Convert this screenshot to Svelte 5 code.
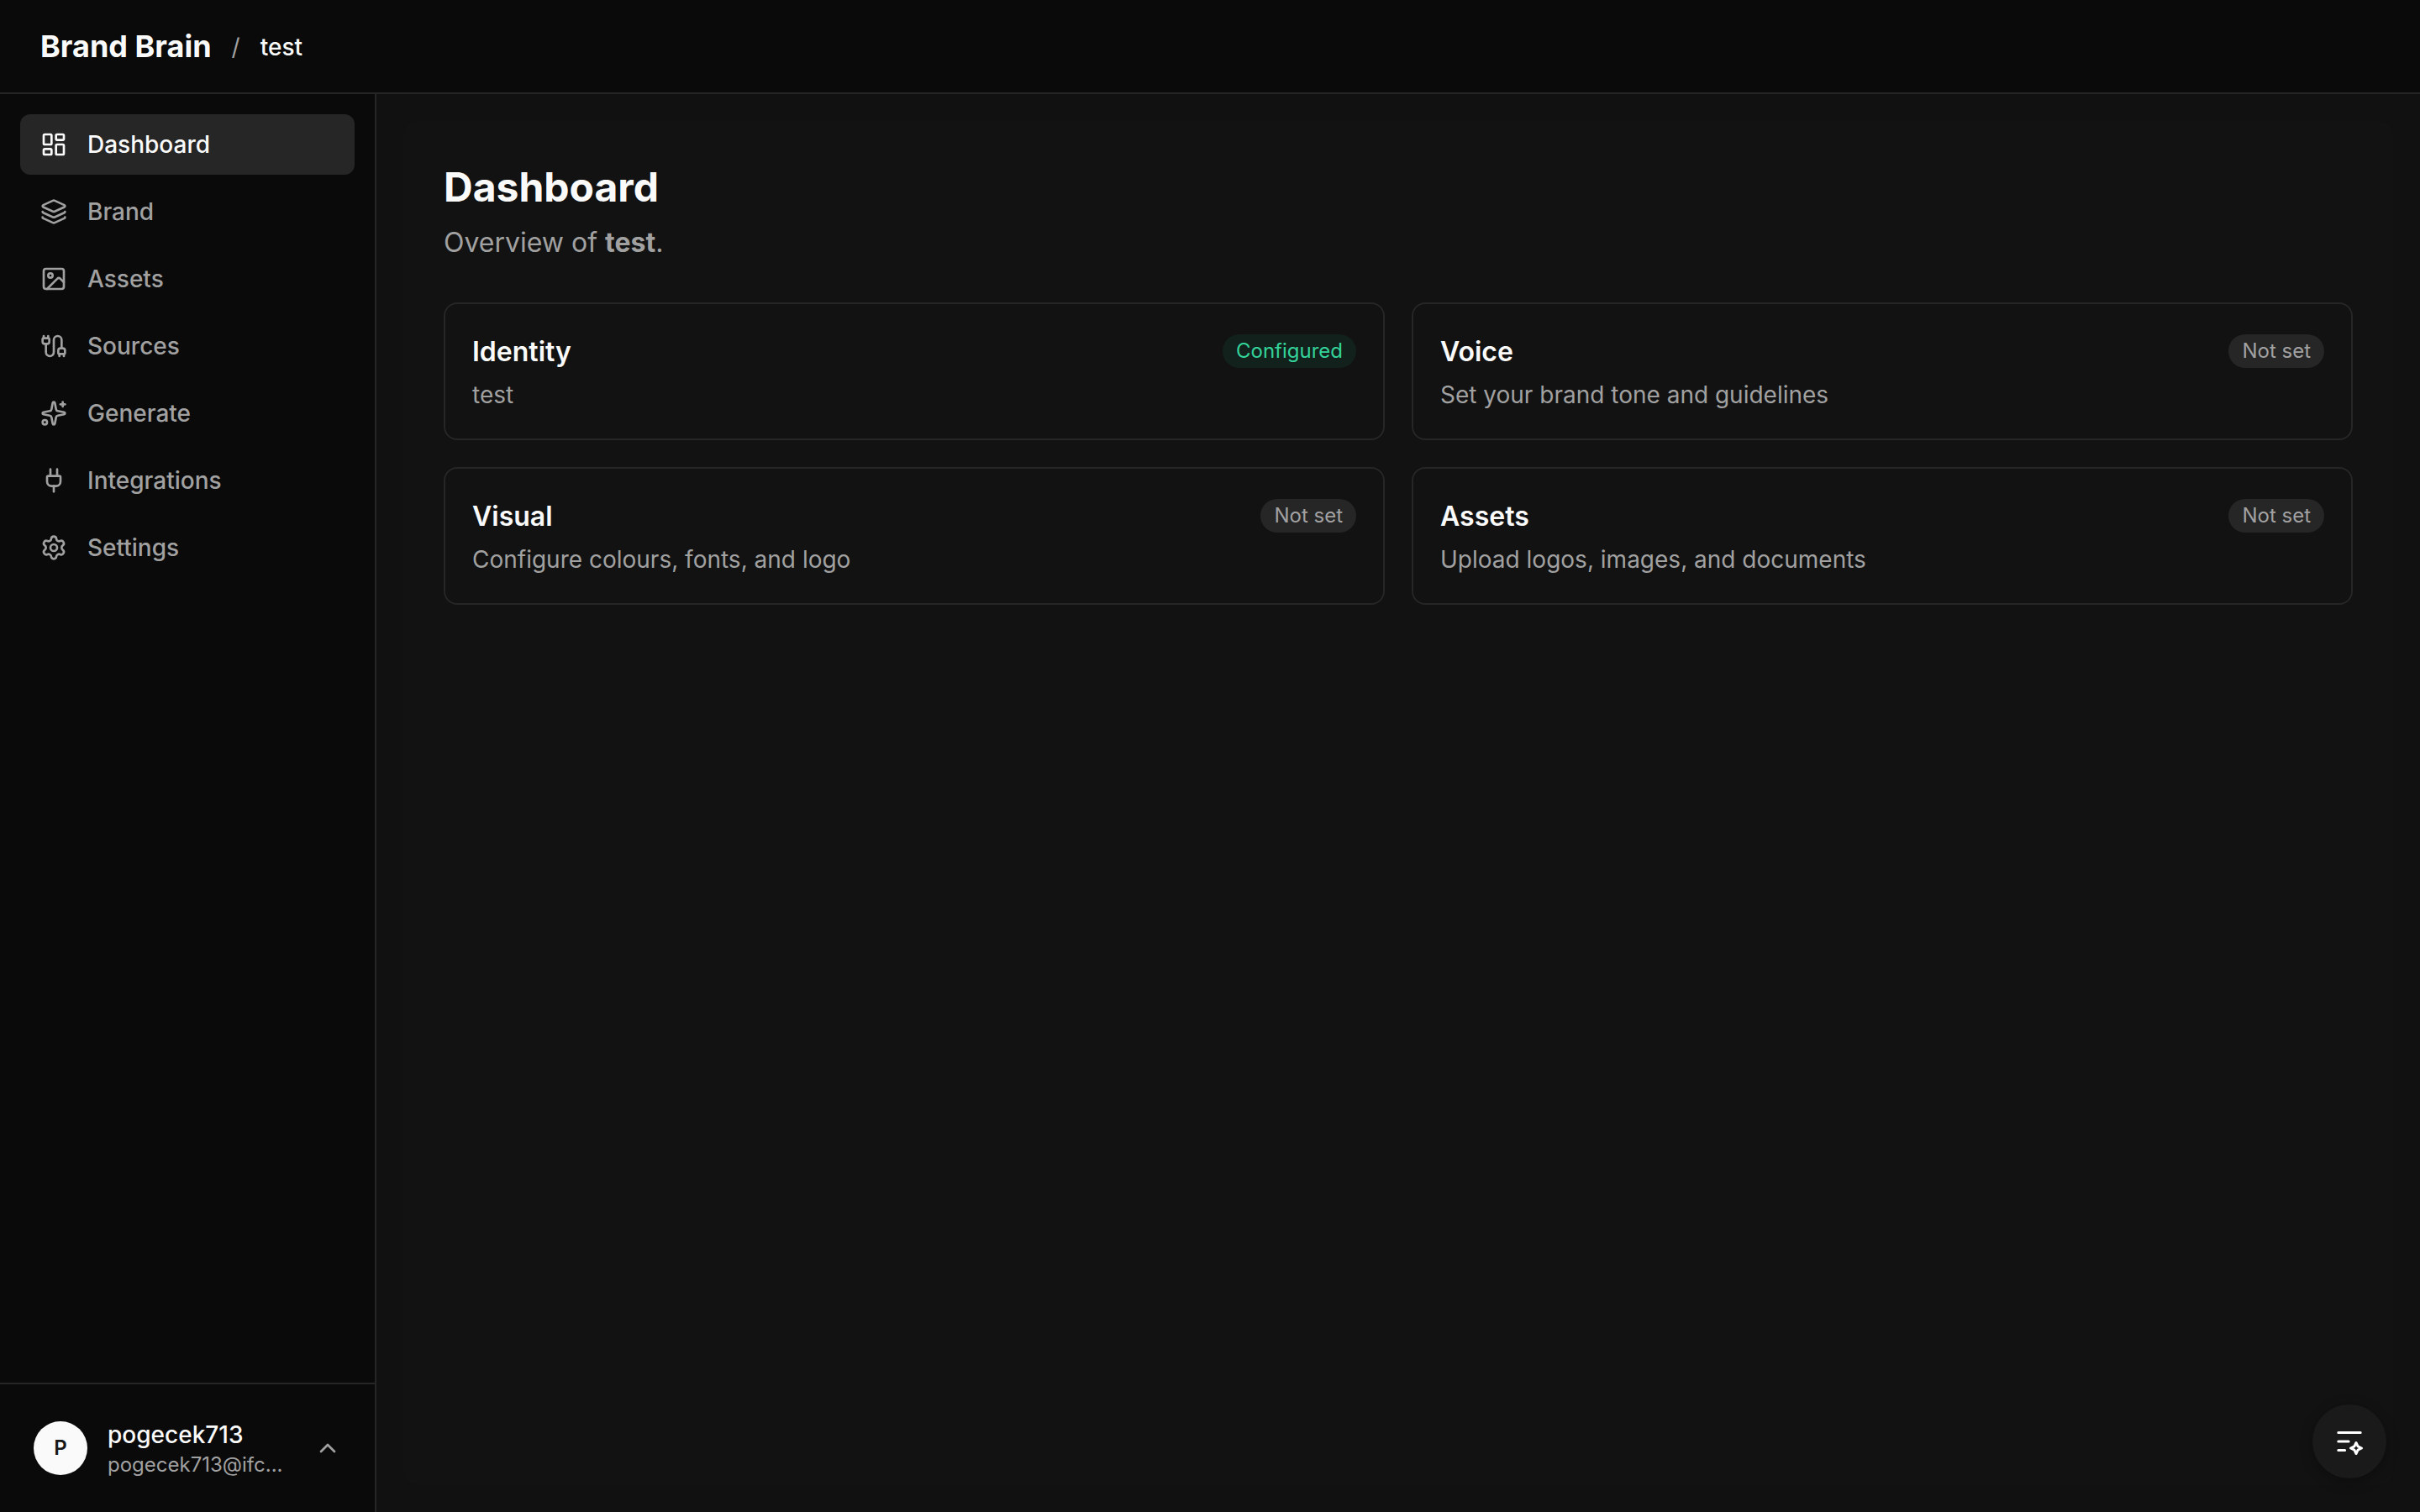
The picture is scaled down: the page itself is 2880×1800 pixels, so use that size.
<script>
  const nav = [
    { label: 'Dashboard', icon: 'dashboard', active: true },
    { label: 'Brand', icon: 'layers' },
    { label: 'Assets', icon: 'image' },
    { label: 'Sources', icon: 'cable' },
    { label: 'Generate', icon: 'sparkles' },
    { label: 'Integrations', icon: 'plug' },
    { label: 'Settings', icon: 'settings' }
  ];

  // lucide shapes, 24x24 grid
  const icons = {
    dashboard:
      '<rect width="7" height="9" x="3" y="3" rx="1"/><rect width="7" height="5" x="14" y="3" rx="1"/><rect width="7" height="9" x="14" y="12" rx="1"/><rect width="7" height="5" x="3" y="16" rx="1"/>',
    layers:
      '<path d="M12.83 2.18a2 2 0 0 0-1.66 0L2.6 6.08a1 1 0 0 0 0 1.83l8.58 3.91a2 2 0 0 0 1.66 0l8.58-3.9a1 1 0 0 0 0-1.83z"/><path d="M2 12a1 1 0 0 0 .58.91l8.6 3.91a2 2 0 0 0 1.65 0l8.58-3.9A1 1 0 0 0 22 12"/><path d="M2 17a1 1 0 0 0 .58.91l8.6 3.91a2 2 0 0 0 1.65 0l8.58-3.9A1 1 0 0 0 22 17"/>',
    image:
      '<rect width="18" height="18" x="3" y="3" rx="2" ry="2"/><circle cx="9" cy="9" r="2"/><path d="m21 15-3.086-3.086a2 2 0 0 0-2.828 0L6 21"/>',
    cable:
      '<path d="M17 19a1 1 0 0 1-1-1v-2a2 2 0 0 1 2-2h2a2 2 0 0 1 2 2v2a1 1 0 0 1-1 1z"/><path d="M17 21v-2"/><path d="M19 14V6.5a1 1 0 0 0-7 0v11a1 1 0 0 1-7 0V10"/><path d="M21 21v-2"/><path d="M3 5V3"/><path d="M4 10a2 2 0 0 1-2-2V6a1 1 0 0 1 1-1h4a1 1 0 0 1 1 1v2a2 2 0 0 1-2 2z"/><path d="M7 5V3"/>',
    sparkles:
      '<path d="M11.017 2.814a1 1 0 0 1 1.966 0l1.051 5.558a2 2 0 0 0 1.594 1.594l5.558 1.051a1 1 0 0 1 0 1.966l-5.558 1.051a2 2 0 0 0-1.594 1.594l-1.051 5.558a1 1 0 0 1-1.966 0l-1.051-5.558a2 2 0 0 0-1.594-1.594l-5.558-1.051a1 1 0 0 1 0-1.966l5.558-1.051a2 2 0 0 0 1.594-1.594z"/><path d="M20 2v4"/><path d="M22 4h-4"/><circle cx="4" cy="20" r="2"/>',
    plug:
      '<path d="M12 22v-5"/><path d="M15 8V2"/><path d="M17 8a1 1 0 0 1 1 1v4a4 4 0 0 1-4 4h-4a4 4 0 0 1-4-4V9a1 1 0 0 1 1-1z"/><path d="M9 8V2"/>',
    settings:
      '<path d="M9.671 4.136a2.34 2.34 0 0 1 4.659 0 2.34 2.34 0 0 0 3.319 1.915 2.34 2.34 0 0 1 2.33 4.033 2.34 2.34 0 0 0 0 3.831 2.34 2.34 0 0 1-2.33 4.033 2.34 2.34 0 0 0-3.319 1.915 2.34 2.34 0 0 1-4.659 0 2.34 2.34 0 0 0-3.32-1.915 2.34 2.34 0 0 1-2.33-4.033 2.34 2.34 0 0 0 0-3.831A2.34 2.34 0 0 1 6.35 6.051a2.34 2.34 0 0 0 3.319-1.915"/><circle cx="12" cy="12" r="3"/>',
    chevron: '<path d="m18 15-6-6-6 6"/>'
  };

  const cards = [
    { title: 'Identity', text: 'test', configured: true },
    { title: 'Voice', text: 'Set your brand tone and guidelines' },
    { title: 'Visual', text: 'Configure colours, fonts, and logo' },
    { title: 'Assets', text: 'Upload logos, images, and documents' }
  ];
</script>

{#snippet icon(name)}
  <svg class="icon" viewBox="0 0 24 24" aria-hidden="true">{@html icons[name]}</svg>
{/snippet}

<div class="app">
  <header class="topbar">
    <span class="logo">Brand Brain</span>
    <span class="slash">/</span>
    <span class="project">test</span>
  </header>

  <div class="body">
    <aside class="sidebar">
      <nav>
        {#each nav as item}
          <a href="#{item.icon}" class="nav-item" class:active={item.active}>
            {@render icon(item.icon)}
            <span>{item.label}</span>
          </a>
        {/each}
      </nav>

      <div class="account">
        <button class="user">
          <span class="avatar">P</span>
          <span class="who">
            <span class="name">pogecek713</span>
            <span class="email">pogecek713@ifc...</span>
          </span>
          {@render icon('chevron')}
        </button>
      </div>
    </aside>

    <main>
      <section class="panel">
        <h1>Dashboard</h1>
        <p class="overview">Overview of <strong>test</strong>.</p>

        <div class="cards">
          {#each cards as card}
            <article class="card">
              <div class="card-head">
                <h2>{card.title}</h2>
                <span class="badge" class:ok={card.configured}>
                  {card.configured ? 'Configured' : 'Not set'}
                </span>
              </div>
              <p>{card.text}</p>
            </article>
          {/each}
        </div>
      </section>
    </main>
  </div>

  <button class="fab" aria-label="Assistant">
    <svg viewBox="0 0 24 24" aria-hidden="true">
      <path d="M3.2 5h17.6M3.2 12h8.2M3.2 19h5.2" />
      <path d="M17.33 13l1.4 2.93 2.93 1.4-2.93 1.4-1.4 2.93-1.4-2.93-2.93-1.4 2.93-1.4z" />
    </svg>
  </button>
</div>

<style>
  :global(body) {
    background: #0a0a0a;
  }

  .app {
    display: flex;
    flex-direction: column;
    height: 100vh;
    font-family: Inter, 'Liberation Sans', sans-serif;
    font-size: 28px;
    line-height: 40px;
    color: #fafafa;
    background: #0a0a0a;
  }

  h1, h2, p {
    margin: 0;
  }

  button {
    font: inherit;
    color: inherit;
    border: 0;
    cursor: pointer;
  }

  .topbar {
    display: flex;
    align-items: center;
    gap: 24px;
    box-sizing: border-box;
    height: 112px;
    padding: 0 48px;
    border-bottom: 2px solid #262626;
  }

  .logo {
    font-size: 36px;
    font-weight: 700;
  }

  .slash {
    padding-top: 2px;
    color: #a1a1a1;
  }

  .project {
    padding-top: 2px;
    font-weight: 500;
  }

  .body {
    display: flex;
    flex: 1;
    min-height: 0;
  }

  .sidebar {
    display: flex;
    flex-direction: column;
    box-sizing: border-box;
    width: 448px;
    border-right: 2px solid #262626;
  }

  nav {
    display: flex;
    flex-direction: column;
    flex: 1;
    gap: 8px;
    padding: 24px;
  }

  .nav-item {
    display: flex;
    align-items: center;
    gap: 24px;
    padding: 16px 24px;
    border-radius: 12px;
    font-weight: 500;
    color: #a1a1a1;
    text-decoration: none;
  }

  .nav-item.active {
    background: #262626;
    color: #fafafa;
  }

  .icon {
    flex: none;
    width: 32px;
    height: 32px;
    fill: none;
    stroke: currentColor;
    stroke-width: 2;
    stroke-linecap: round;
    stroke-linejoin: round;
  }

  .account {
    padding: 24px;
    border-top: 2px solid #262626;
  }

  .user {
    display: flex;
    align-items: center;
    gap: 24px;
    width: 100%;
    padding: 16px;
    background: none;
    text-align: left;
  }

  .user .icon {
    color: #a1a1a1;
  }

  .avatar {
    display: flex;
    align-items: center;
    justify-content: center;
    flex: none;
    width: 64px;
    height: 64px;
    border-radius: 50%;
    background: #fafafa;
    color: #171717;
    font-size: 24px;
    font-weight: 600;
  }

  .who {
    display: flex;
    flex-direction: column;
    flex: 1;
    min-width: 0;
  }

  .name {
    font-weight: 500;
  }

  .email {
    font-size: 24px;
    line-height: 32px;
    color: #a1a1a1;
    white-space: nowrap;
  }

  main {
    flex: 1;
    display: flex;
    padding: 32px;
    background: #111111;
  }

  .panel {
    flex: 1;
    padding: 48px;
    border-radius: 16px;
    background: #121212;
  }

  h1 {
    font-size: 48px;
    font-weight: 700;
    line-height: 62px;
  }

  .overview {
    margin-top: 11px;
    font-size: 32px;
    line-height: 48px;
    color: #a1a1a1;
  }

  .cards {
    display: grid;
    grid-template-columns: 1fr 1fr;
    gap: 32px;
    margin-top: 47px;
  }

  .card {
    box-sizing: border-box;
    height: 164px;
    padding: 32px;
    border: 2px solid #262626;
    border-radius: 16px;
  }

  .card-head {
    display: flex;
    align-items: center;
    justify-content: space-between;
  }

  h2 {
    margin-bottom: -1px;
    padding-top: 1px;
    font-size: 32px;
    font-weight: 600;
    line-height: 48px;
  }

  .card p {
    margin-top: 8px;
    color: #a1a1a1;
  }

  .badge {
    padding: 4px 16px;
    border-radius: 20px;
    background: #262626;
    color: #a1a1a1;
    font-size: 24px;
    line-height: 32px;
  }

  .badge.ok {
    background: #12211c;
    color: #34d399;
  }

  .fab {
    position: fixed;
    right: 40px;
    bottom: 40px;
    display: flex;
    align-items: center;
    justify-content: center;
    width: 88px;
    height: 88px;
    padding: 0;
    border-radius: 50%;
    background: #1a1a1a;
    box-shadow: 0 4px 16px rgba(0, 0, 0, 0.3);
  }

  .fab svg {
    width: 36px;
    height: 36px;
    fill: none;
    stroke: #ffffff;
    stroke-width: 2;
    stroke-linecap: round;
    stroke-linejoin: round;
  }
</style>
